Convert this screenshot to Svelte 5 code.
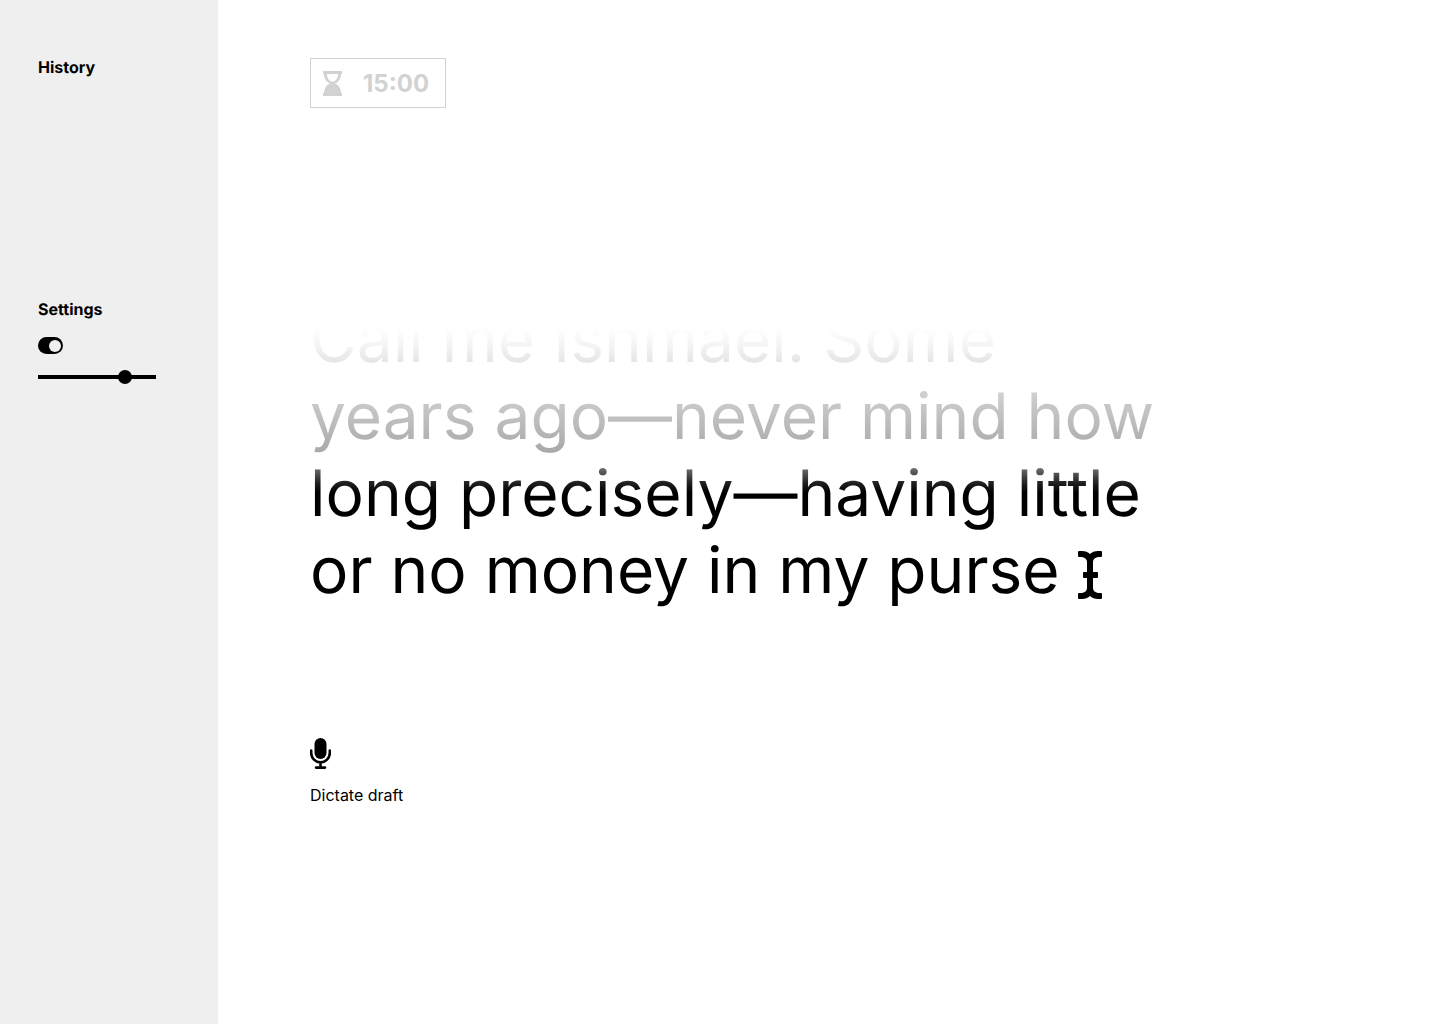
<script>
  let focusMode = $state(true);
  let size = $state(77);
</script>

<div class="app">
  <aside class="sidebar">
    <section class="history">
      <h2>History</h2>
    </section>
    <section class="settings">
      <h2>Settings</h2>
      <input class="toggle" type="checkbox" role="switch" aria-label="Focus mode" bind:checked={focusMode} />
      <input class="slider" type="range" min="0" max="100" aria-label="Text size" bind:value={size} />
    </section>
  </aside>

  <main class="editor">
    <button class="timer" type="button">
      <svg width="19" height="25" viewBox="0 0 19 25" aria-hidden="true">
        <path fill="currentColor" fill-rule="evenodd" d="M0 0H19V3H18C18 7 16 11 12 12.500C16 14 18 18 18 22H19V25H0V22H1C1 18 3 14 7 12.500C3 11 1 7 1 3H0ZM4 3C4 7 6 10 9.500 11C13 10 15 7 15 3Z" />
      </svg>
      <span>15:00</span>
    </button>

    <p class="draft">
      Call me Ishmael. Some years ago—never mind how long precisely—having little or no money in my purse
      <svg class="caret" width="24" height="48" viewBox="0 0 24 48" aria-hidden="true">
        <path fill="currentColor" d="M1 0H4Q9 0 12 3Q15 0 20 0H23Q24 0 24 1V5Q24 6 23 6H20Q15 7 15 11V21H19Q20 21 20 22V26Q20 27 19 27H15V37Q15 41 20 42H23Q24 42 24 43V47Q24 48 23 48H20Q15 48 12 45Q9 48 4 48H1Q0 48 0 47V43Q0 42 1 42H4Q9 41 9 37V27H6Q5 27 5 26V22Q5 21 6 21H9V11Q9 7 4 6H1Q0 6 0 5V1Q0 0 1 0Z" />
      </svg>
    </p>

    <button class="dictate" type="button">
      <svg width="21" height="31" viewBox="0 0 21 31" aria-hidden="true">
        <rect x="4.500" y="0" width="12" height="21" rx="6" fill="currentColor" />
        <path d="M1.200 12.500V15A9.300 9.300 0 0 0 19.800 15V12.500M10.500 24.500V29.500M6 29.600H15" fill="none" stroke="currentColor" stroke-width="2.600" stroke-linecap="round" />
      </svg>
      <span>Dictate draft</span>
    </button>
  </main>
</div>

<style>
  :global(body) {
    margin: 0;
    background: #fff;
  }

  .app {
    display: flex;
    min-height: 100vh;
    font-family: Inter, "Liberation Sans", sans-serif;
    font-size: 16px;
    line-height: 20px;
    color: #000;
    text-rendering: geometricPrecision;
  }

  .sidebar {
    box-sizing: border-box;
    flex: 0 0 218px;
    padding: 58px 38px;
    background: #efefef;
  }

  .history {
    min-height: 242px;
  }

  .settings {
    display: flex;
    flex-direction: column;
    align-items: flex-start;
  }

  h2 {
    margin: 0;
    font-size: 16px;
    font-weight: 700;
    line-height: 18px;
  }

  .toggle {
    appearance: none;
    display: flex;
    align-items: center;
    box-sizing: border-box;
    width: 25px;
    height: 17px;
    margin: 19px 0 16px;
    padding: 0 2px;
    border-radius: 9px;
    background: #000;
    cursor: pointer;
  }

  .toggle::before {
    content: "";
    width: 12px;
    height: 12px;
    border-radius: 50%;
    background: #efefef;
  }

  .toggle:checked {
    justify-content: flex-end;
  }

  .slider {
    appearance: none;
    width: 118px;
    height: 14px;
    margin: 0;
    background: transparent;
    cursor: pointer;
  }

  .slider::-webkit-slider-runnable-track {
    height: 4px;
    background: #000;
  }

  .slider::-webkit-slider-thumb {
    appearance: none;
    width: 14px;
    height: 14px;
    margin-top: -5px;
    border-radius: 50%;
    background: #000;
  }

  .editor {
    display: flex;
    flex: 1;
    flex-direction: column;
    align-items: flex-start;
    min-width: 0;
    padding: 58px 92px;
  }

  button {
    font: inherit;
    color: inherit;
    background: none;
    border: 0;
    padding: 0;
    cursor: pointer;
  }

  .timer {
    display: flex;
    align-items: center;
    gap: 21px;
    padding: 10px 16px 9px 12px;
    border: 1px solid #d2d2d2;
    font-size: 24px;
    font-weight: 700;
    line-height: 29px;
    color: #d2d2d2;
  }

  .draft {
    max-width: 860px;
    margin: 193px 0 0;
    font-size: 64px;
    line-height: 77px;
    color: transparent;
    background: linear-gradient(
      #fff 27px,
      #f3f3f3 46px,
      #e4e4e4 62px,
      #d0d0d0 92px,
      #a8a8a8 152px,
      #606060 170px,
      #202020 182px,
      #000 192px
    );
    background-clip: text;
  }

  .caret {
    vertical-align: -6px;
    color: #000;
  }

  .dictate {
    display: flex;
    flex-direction: column;
    align-items: flex-start;
    gap: 16px;
    margin-top: 129px;
  }
</style>
